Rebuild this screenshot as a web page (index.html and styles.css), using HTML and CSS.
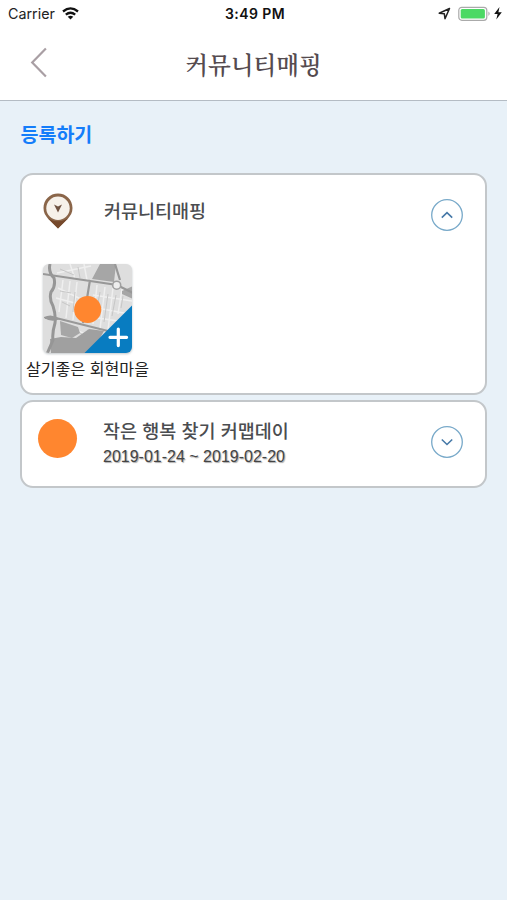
FILE: index.html
```html
<!DOCTYPE html>
<html lang="ko">
<head>
<meta charset="utf-8">
<title>커뮤니티매핑</title>
<link rel="stylesheet" href="styles.css">
</head>
<body>
<header class="header">
  <div class="status">
    <div class="status-left">
      <span>Carrier</span>
      <svg width="17" height="13" viewBox="0 0 17 13" fill="none" stroke="#111" stroke-width="2.3"><path d="M1 4.5Q8.5-1.7 16 4.5"/><path d="M3.8 7.7Q8.5 3.8 13.2 7.7"/><path d="M8.5 12.4L5.7 9.7Q8.5 7.7 11.3 9.7Z" fill="#111" stroke="none"/></svg>
    </div>
    <span class="time">3:49 PM</span>
    <div class="status-right">
      <svg width="13" height="13" viewBox="0 0 13 13" fill="none" stroke="#222" stroke-width="1.5" stroke-linejoin="round"><path d="M11.5 1.5L1.2 6.2L6.3 6.7L7 11.7Z"/></svg>
      <svg width="33" height="16" viewBox="0 0 33 16"><rect x=".8" y="1.3" width="28" height="13" rx="3" fill="#fff" stroke="#aaa" stroke-width="1.2"/><rect x="2.7" y="3" width="24.2" height="9.6" rx="1.5" fill="#4bd964"/><path d="M30.5 5.6Q32.7 7.8 30.5 10Z" fill="#999"/></svg>
      <svg width="8" height="13" viewBox="0 0 8 13"><path d="M5.5 0L.2 7H3.6L2.3 12.5L7.8 5.2H4.4Z" fill="#111"/></svg>
    </div>
  </div>
  <div class="nav">
    <svg class="back" width="18" height="32" viewBox="0 0 18 32" fill="none" stroke="#a99fa4" stroke-width="2.2"><path d="M15.9 2.5L2.2 16.5L15.9 30.5"/></svg>
    <h1 class="title">커뮤니티매핑</h1>
  </div>
</header>
<main class="content">
  <a class="register">등록하기</a>
  <section class="card card-open">
    <div class="row">
      <svg class="pin" width="30" height="36" viewBox="0 0 30 36"><path d="M15 .5C6.8.5.5 6.8.5 15C.5 24 8 27.5 15 35.5C22 27.5 29.5 24 29.5 15C29.5 6.8 23.2.5 15 .5Z" fill="#8a6549"/><path d="M5 25.5Q15 31 25 25.5L15 35.5Z" fill="#76492c"/><circle cx="15" cy="15.2" r="11.7" fill="#f6f1ea"/><path d="M11 11.5L15 13.4L19 11.5L15 19.6Z" fill="#6e5140"/></svg>
      <h2 class="name">커뮤니티매핑</h2>
      <svg class="toggle" width="34" height="34" viewBox="0 0 34 34" fill="none"><circle cx="17" cy="17" r="15.3" stroke="#78a9c9" stroke-width="1.3"/><path d="M11.8 19.7L17 14.7L22.2 19.7" stroke="#4679a8" stroke-width="1.6"/></svg>
    </div>
    <div class="place">
      <svg class="map" width="90" height="90" viewBox="0 0 90 90">
        <defs><clipPath id="tile"><rect width="89" height="89" rx="6"/></clipPath></defs>
        <g clip-path="url(#tile)">
          <rect width="90" height="90" fill="#dedede"/>
          <g fill="none" stroke="#efefef" stroke-width="1.5"><path d="M14 9L48 2M27 0L32 15M41 0L44 16M15 24L42 37M20 16L16 48M27 17L23 54M34 18L30 56M13 34L43 42M54 21L50 60M62 23L57 65M70 24L65 66M79 25L75 50M50 31L89 37M49 43L86 50M48 53L75 57M24 62L60 78"/></g>
          <g fill="none" stroke="#c6c6c6" stroke-width="1"><path d="M17 5L31 11M35 3L37 14M17 27L28 29M19 38L27 42M32 28L30 48M57 28L53 50M65 30L61 58M73 31L69 52M80 32L78 44M44 66L54 70M37 69L50 76"/></g>
          <path d="M57 0H73L71 18L49 15ZM79 27L90 22V35L79 30Z" fill="#a6a6a6"/>
          <path d="M17 57L35 63L37 69L29 74L18 71Z" fill="#a6a6a6"/>
          <path d="M8 90L7 75L18 73L33 74L46 65L61 67L48 90Z" fill="#a0a0a0"/>
          <path d="M7 0Q5 8 11 14Q13 22 8 28Q6 35 10 42Q13 51 12 59Q9 69 10 76L4 90" fill="none" stroke="#969696" stroke-width="3"/>
          <path d="M0 10L74 21L90 29M47 16L40 59M2 54L13 54L65 67M72 0L77 16" fill="none" stroke="#989898" stroke-width="2.2"/>
          <path d="M1 53Q9 49 17 55Q9 59 1 54Z" fill="#989898"/>
          <circle cx="73.7" cy="21.2" r="4" fill="#eee" stroke="#a0a0a0" stroke-width="1.6"/>
          <path d="M89 41.5V89H41.5Z" fill="#087cc1"/>
          <path d="M75.3 65V81.6M67 73.3H83.6" stroke="#fff" stroke-width="3.2" stroke-linecap="round"/>
        </g>
        <circle cx="44.7" cy="45.5" r="13.6" fill="#ff862f"/>
      </svg>
      <span class="caption">살기좋은 회현마을</span>
    </div>
  </section>
  <section class="card card-closed">
    <div class="row">
      <span class="dot"></span>
      <div class="event">
        <h2 class="name event-name">작은 행복 찾기 커맵데이</h2>
        <span class="dates">2019-01-24 ~ 2019-02-20</span>
      </div>
      <svg class="toggle" width="34" height="34" viewBox="0 0 34 34" fill="none"><circle cx="17" cy="17" r="15.3" stroke="#78a9c9" stroke-width="1.3"/><path d="M11.8 14.5L17 19.5L22.2 14.5" stroke="#4679a8" stroke-width="1.6"/></svg>
    </div>
  </section>
</main>
</body>
</html>
```
FILE: styles.css
```css
* { box-sizing: border-box; }
body {
  margin: 0;
  min-height: 900px;
  background: #e8f1f8;
  font-family: "Liberation Sans", "Noto Sans CJK KR", sans-serif;
}
h1, h2 { margin: 0; white-space: nowrap; }
svg { display: block; flex: none; }
.header {
  height: 101px;
  background: #fff;
  border-bottom: 1px solid #b4bcc4;
}
.status {
  display: grid;
  grid-template-columns: 1fr auto 1fr;
  align-items: center;
  height: 27px;
  padding: 0 5px 0 8px;
  font: 14.3px/27px Inter, sans-serif;
  color: #222;
}
.status-left, .status-right { display: flex; align-items: center; }
.status-left { gap: 7px; }
.status-right { justify-content: flex-end; gap: 3px; }
.status-right svg:first-child { margin-right: 4px; }
.time { font-size: 14px; letter-spacing: 0.4px; font-weight: 600; color: #111; }
.nav {
  display: grid;
  grid-template-columns: 60px 1fr 60px;
  height: 73px;
}
.back { margin: 19px 0 0 30px; }
.title {
  font: 600 23.6px/74px "Noto Serif CJK KR", "Noto Sans CJK KR", sans-serif;
  color: #554b4f;
  text-align: center;
}
.content { padding: 18px 20px; }
.register {
  display: block;
  height: 54px;
  padding-left: 0.5px;
  font: 700 19.5px/29px "Noto Sans CJK KR", sans-serif;
  color: #147dfa;
}
.card {
  background: #fff;
  border: 2px solid #c3c7ca;
  border-radius: 13px;
}
.card-open { height: 222px; margin-bottom: 5px; }
.card-closed { height: 88px; }
.row { display: flex; align-items: flex-start; }
.pin { margin: 18px 31px 0 21px; }
.name {
  flex: 1;
  font: 500 18.5px/28px "Noto Sans CJK KR", sans-serif;
  color: #4b4d50;
  margin-top: 21px;
}
.toggle { margin: 23px 21px 0 auto; }
.place {
  display: flex;
  flex-direction: column;
  width: 130px;
  padding: 32px 0 0 4px;
}
.map { margin-left: 17px; filter: drop-shadow(0 1px 1px #c0c5c8); }
.caption {
  font: 400 16.1px/24px "Noto Sans CJK KR", sans-serif;
  color: #222;
  white-space: nowrap;
  margin-top: 2px;
}
.dot {
  width: 39px;
  height: 39px;
  margin: 17px 26px 0 16px;
  border-radius: 50%;
  background: #ff862f;
}
.event { display: flex; flex-direction: column; }
.event-name { flex: none; margin-top: 14px; }
.dates {
  font-size: 16px;
  line-height: 26px;
  color: #444;
  text-shadow: 1px 1px 1px #aaa;
  white-space: nowrap;
}
```
